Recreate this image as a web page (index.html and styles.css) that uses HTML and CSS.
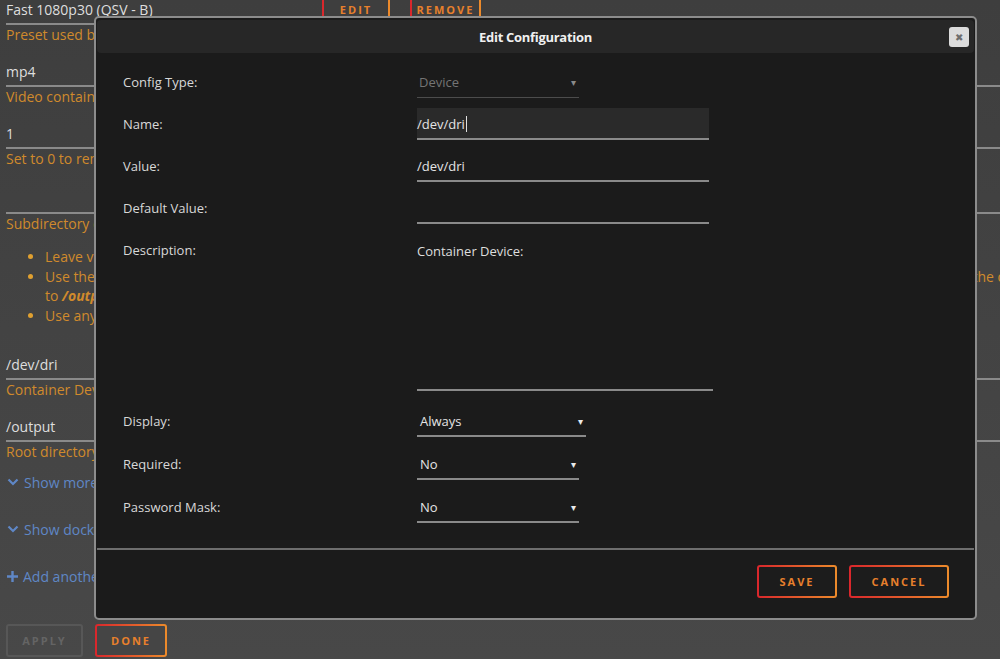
FILE: index.html
```html
<!DOCTYPE html>
<html lang="en">
<head>
    <meta charset="UTF-8">
    <meta name="viewport" content="width=device-width, initial-scale=1.0">
    <title>Edit Configuration</title>
    <link rel="stylesheet" href="styles.css">
</head>
<body>
    <div class="page">
        <div class="field">
            <div class="field-line">
                <div class="value narrow">Fast 1080p30 (QSV - B)</div>
                <button class="btn small">EDIT</button>
                <button class="btn small">REMOVE</button>
            </div>
            <div class="help">Preset used by the transcoder for every converted file</div>
        </div>
        <div class="field">
            <div class="value">mp4</div>
            <div class="help">Video container used for the output file</div>
        </div>
        <div class="field">
            <div class="value">1</div>
            <div class="help">Set to 0 to remove the original file after conversion</div>
        </div>
        <div class="field gap">
            <div class="value"></div>
            <div class="help">Subdirectory of the output folder where converted files are written</div>
        </div>
        <ul class="notes">
            <li>Leave value empty to write the files directly to the output folder</li>
            <li>
                <div class="spread"><span>Use the placeholders to build a path relative to the source folder,</span><span>matching part of the directory</span></div>
                to <b><i>/output</i></b> and the name of the source directory
            </li>
            <li>Use any other text to create a fixed subdirectory</li>
        </ul>
        <div class="field">
            <div class="value">/dev/dri</div>
            <div class="help">Container Device: /dev/dri</div>
        </div>
        <div class="field">
            <div class="value">/output</div>
            <div class="help">Root directory of the converted files</div>
        </div>
        <div class="link first">
            <svg width="12" height="12" viewBox="0 0 12 12"><path d="M1.5 3.5 6 8l4.5-4.5" fill="none" stroke="currentColor" stroke-width="2.2"/></svg>
            Show more settings ...
        </div>
        <div class="link">
            <svg width="12" height="12" viewBox="0 0 12 12"><path d="M1.5 3.5 6 8l4.5-4.5" fill="none" stroke="currentColor" stroke-width="2.2"/></svg>
            Show docker allocations ...
        </div>
        <div class="link">
            <svg width="11" height="11" viewBox="0 0 11 11"><path d="M5.5 0v11M0 5.5h11" stroke="currentColor" stroke-width="2.4"/></svg>
            Add another Path, Port, Variable, Label or Device
        </div>
        <div class="actions">
            <button class="btn disabled">APPLY</button>
            <button class="btn">DONE</button>
        </div>
    </div>

    <div class="modal">
        <div class="modal-head">
            <span class="modal-title">Edit Configuration</span>
            <span class="close">&#x2716;</span>
        </div>
        <div class="modal-body">
            <div class="row">
                <label>Config Type:</label>
                <div class="input select off w162">Device<span class="caret">&#9662;</span></div>
            </div>
            <div class="row">
                <label>Name:</label>
                <div class="input focus w292">/dev/dri<span class="cursor"></span></div>
            </div>
            <div class="row">
                <label>Value:</label>
                <div class="input w292">/dev/dri</div>
            </div>
            <div class="row">
                <label>Default Value:</label>
                <div class="input w292"></div>
            </div>
            <div class="row desc">
                <label>Description:</label>
                <div class="textarea">Container Device:</div>
            </div>
            <div class="row tight">
                <label>Display:</label>
                <div class="input select w169">Always<span class="caret">&#9662;</span></div>
            </div>
            <div class="row tight">
                <label>Required:</label>
                <div class="input select w162">No<span class="caret">&#9662;</span></div>
            </div>
            <div class="row tight">
                <label>Password Mask:</label>
                <div class="input select w162">No<span class="caret">&#9662;</span></div>
            </div>
        </div>
        <div class="modal-foot">
            <button class="btn dark">SAVE</button>
            <button class="btn dark wide">CANCEL</button>
        </div>
    </div>
</body>
</html>
```

FILE: styles.css
```css
body {
    margin: 0;
    height: 659px;
    overflow: hidden;
    font-family: "Open Sans", "Noto Sans", sans-serif;
    font-size: 13px;
    color: #dcdcdc;
    background: linear-gradient(to bottom, #3e3e3e, #484848);
    position: relative;
}
.page {
    width: 1100px;
    padding: 0 6px;
    margin-top: -3px;
    font-size: 14px;
}
.field {
    margin-bottom: 14px;
}
.field.gap {
    padding-top: 3px;
    margin-bottom: 12px;
}
.field-line {
    display: flex;
    align-items: flex-start;
    height: 28px;
}
.value {
    height: 26px;
    line-height: 26px;
    border-bottom: 2px solid #8a8a8a;
    color: #dedede;
}
.value.narrow {
    width: 310px;
    margin-right: 6px;
}
.help {
    line-height: 20px;
    color: #d08a2c;
}
.notes {
    margin: 13px 0 27px;
    padding-left: 39px;
    color: #d08a2c;
    line-height: 19.5px;
    white-space: nowrap;
}
.notes li::marker {
    color: #e0a030;
}
.spread {
    width: 1011px;
    display: flex;
    justify-content: space-between;
}
.link {
    display: flex;
    align-items: center;
    gap: 5px;
    height: 20px;
    margin-bottom: 27px;
    color: #5f87c6;
    padding-left: 1px;
}
.link.first {
    margin-top: -4px;
}
.actions {
    display: flex;
    gap: 12px;
    margin-top: 38px;
}
.btn {
    font-family: inherit;
    font-size: 11px;
    font-weight: 700;
    letter-spacing: 2px;
    color: #e7802c;
    height: 33px;
    width: 72px;
    border: 2px solid transparent;
    border-radius: 3px;
    background: linear-gradient(#454545, #454545) padding-box,
                linear-gradient(to right, #d9262c, #ec8b2b) border-box;
    padding: 0;
}
.btn.small {
    flex: none;
    height: 32px;
    width: 68px;
    margin-top: -4px;
    margin-right: 20px;
    background: linear-gradient(#3e3e3e, #3e3e3e) padding-box,
                linear-gradient(to right, #d9262c, #ec8b2b) border-box;
}
.btn.small + .btn.small {
    width: 71px;
}
.btn.disabled {
    width: 77px;
    color: #646464;
    background: none;
    border-color: #575757;
}
.btn.dark {
    width: 80px;
    height: 33px;
    background: linear-gradient(#1c1c1c, #1c1c1c) padding-box,
                linear-gradient(to right, #d9262c, #ec8b2b) border-box;
}
.btn.wide {
    width: 100px;
}

/* dialog */
.modal {
    position: absolute;
    left: 94px;
    top: 16px;
    width: 883px;
    height: 604px;
    box-sizing: border-box;
    border: 2px solid #8c8c8c;
    border-radius: 5px;
    padding: 2px 1px 0;
    background: #1b1b1b;
    display: flex;
    flex-direction: column;
}
.modal-head {
    height: 33px;
    flex: none;
    background: #272727;
    border-radius: 4px;
    display: flex;
    align-items: center;
    justify-content: center;
    position: relative;
}
.modal-title {
    font-weight: 700;
    font-size: 13px;
    color: #f0f0f0;
    letter-spacing: -0.3px;
}
.close {
    position: absolute;
    right: 5px;
    top: 7px;
    width: 20px;
    height: 20px;
    border-radius: 3px;
    background: #dcdcdc;
    color: #6e6e6e;
    font-size: 10px;
    line-height: 20px;
    text-align: center;
}
.modal-body {
    flex: 1;
    padding: 13px 25px 0 26px;
}
.row {
    display: flex;
    margin-bottom: 10px;
}
.row.tight {
    margin-bottom: 11px;
}
.row.desc {
    margin-bottom: 14px;
}
.row label {
    width: 294px;
    flex: none;
    line-height: 32px;
    color: #d8d8d8;
}
.input {
    height: 32px;
    line-height: 32px;
    box-sizing: border-box;
    border-bottom: 2px solid #8a8a8a;
    color: #e4e4e4;
    position: relative;
}
.input.focus {
    background: #2a2a2a;
}
.input.select {
    padding-left: 3px;
}
.input.off {
    color: #747474;
    border-bottom: 1px solid #4c4c4c;
    padding-left: 2px;
}
.cursor {
    display: inline-block;
    width: 1px;
    height: 16px;
    margin-left: 1px;
    vertical-align: -3px;
    background: #e0e0e0;
}
.caret {
    position: absolute;
    right: 3px;
    top: 0;
    font-size: 10px;
    color: #eaeaea;
}
.off .caret {
    color: #8a8a8a;
}
.w162 { width: 162px; }
.w169 { width: 169px; }
.w292 { width: 292px; }
.textarea {
    width: 296px;
    height: 157px;
    box-sizing: border-box;
    border-bottom: 2px solid #8a8a8a;
    padding-top: 7px;
    line-height: 20px;
    color: #dedede;
}
.modal-foot {
    flex: none;
    border-top: 2px solid #6e6e6e;
    padding: 15px 25px 20px;
    display: flex;
    justify-content: flex-end;
    gap: 12px;
}
```
